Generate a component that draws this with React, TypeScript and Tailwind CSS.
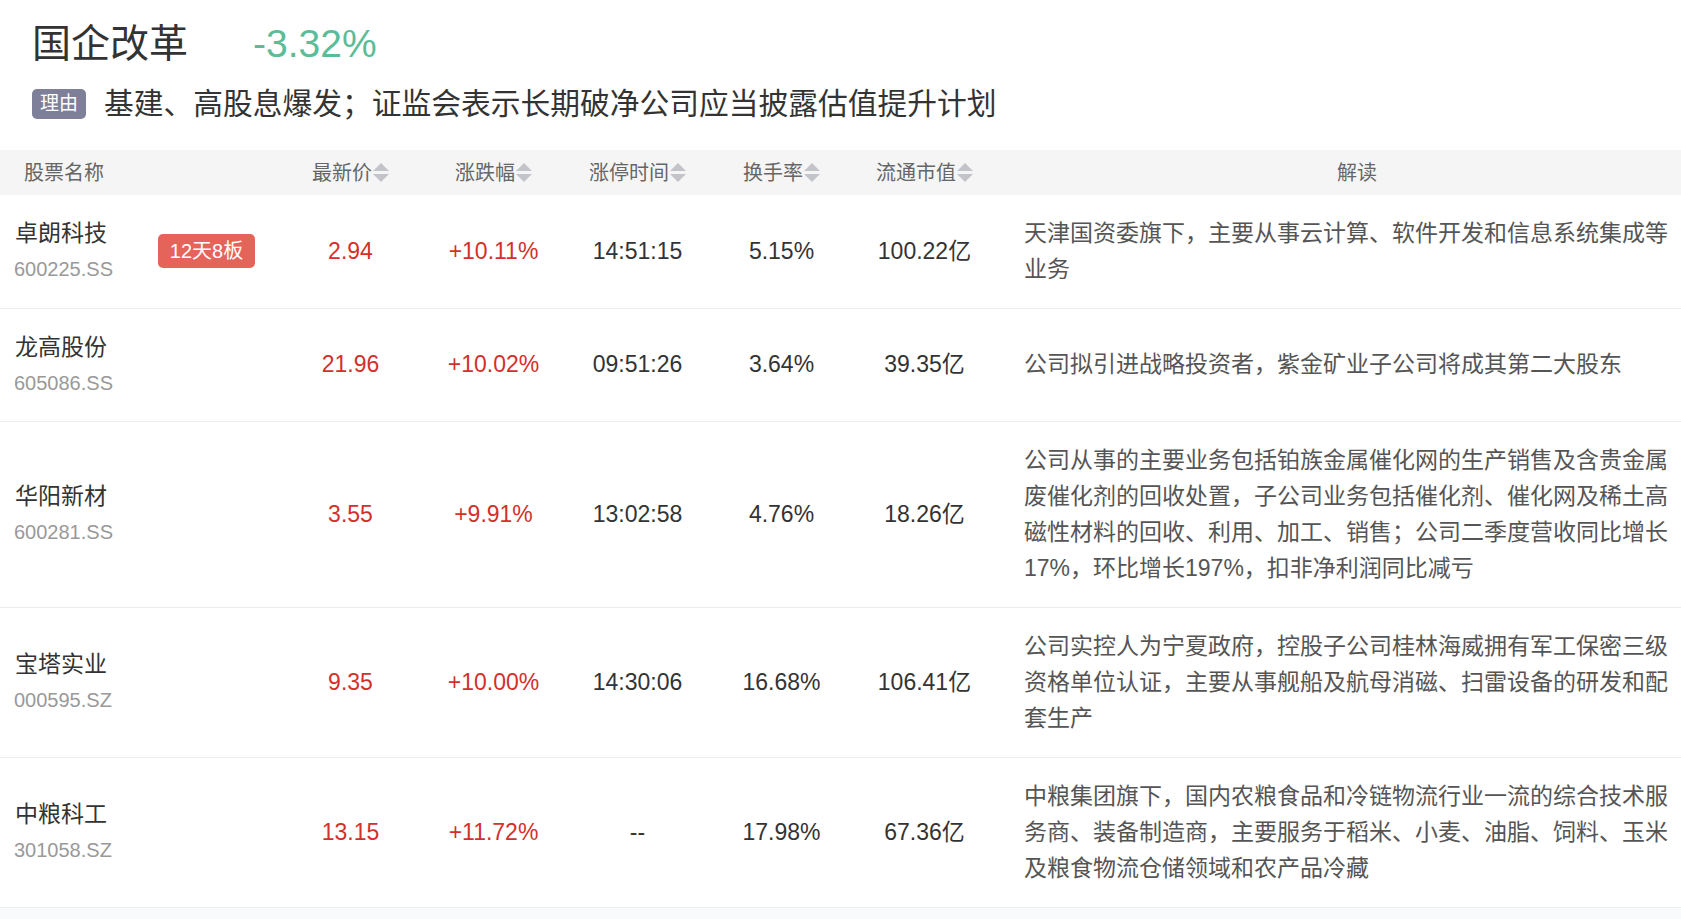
import React from "react";

interface Stock {
  name: string;
  code: string;
  badge?: string;
  price: string;
  change: string;
  time: string;
  turnover: string;
  cap: string;
  desc: string;
}

const stocks: Stock[] = [
  {
    name: "卓朗科技",
    code: "600225.SS",
    badge: "12天8板",
    price: "2.94",
    change: "+10.11%",
    time: "14:51:15",
    turnover: "5.15%",
    cap: "100.22亿",
    desc: "天津国资委旗下，主要从事云计算、软件开发和信息系统集成等业务",
  },
  {
    name: "龙高股份",
    code: "605086.SS",
    price: "21.96",
    change: "+10.02%",
    time: "09:51:26",
    turnover: "3.64%",
    cap: "39.35亿",
    desc: "公司拟引进战略投资者，紫金矿业子公司将成其第二大股东",
  },
  {
    name: "华阳新材",
    code: "600281.SS",
    price: "3.55",
    change: "+9.91%",
    time: "13:02:58",
    turnover: "4.76%",
    cap: "18.26亿",
    desc: "公司从事的主要业务包括铂族金属催化网的生产销售及含贵金属废催化剂的回收处置，子公司业务包括催化剂、催化网及稀土高磁性材料的回收、利用、加工、销售；公司二季度营收同比增长17%，环比增长197%，扣非净利润同比减亏",
  },
  {
    name: "宝塔实业",
    code: "000595.SZ",
    price: "9.35",
    change: "+10.00%",
    time: "14:30:06",
    turnover: "16.68%",
    cap: "106.41亿",
    desc: "公司实控人为宁夏政府，控股子公司桂林海威拥有军工保密三级资格单位认证，主要从事舰船及航母消磁、扫雷设备的研发和配套生产",
  },
  {
    name: "中粮科工",
    code: "301058.SZ",
    price: "13.15",
    change: "+11.72%",
    time: "--",
    turnover: "17.98%",
    cap: "67.36亿",
    desc: "中粮集团旗下，国内农粮食品和冷链物流行业一流的综合技术服务商、装备制造商，主要服务于稻米、小麦、油脂、饲料、玉米及粮食物流仓储领域和农产品冷藏",
  },
];

const cols = "grid grid-cols-[279px_143px_143px_145px_143px_143px_1fr]";

const SortArrows = () => (
  <svg width="16" height="20" viewBox="0 0 16 20" className="ml-[1px]">
    <path d="M8 0 L16 8 L0 8 Z" fill="#c3c4ca" />
    <path d="M0 11 L16 11 L8 19 Z" fill="#c3c4ca" />
  </svg>
);

const SortHeader = ({ label }: { label: string }) => (
  <div className="flex items-center justify-center">
    <span>{label}</span>
    <SortArrows />
  </div>
);

export default function App() {
  return (
    <div
      className="w-full min-h-screen bg-white text-[#333]"
      style={{ fontFamily: '"Liberation Sans", Arial, "Noto Sans CJK SC", sans-serif' }}
    >
      {/* Title */}
      <div className="pl-[32px] pt-[18px]">
        <div className="flex items-center h-[50px]">
          <span className="text-[39px] leading-none text-[#333]">国企改革</span>
          <span className="ml-[65px] text-[39px] leading-none text-[#5bbd97]">-3.32%</span>
        </div>
        <div className="flex items-center mt-[21px] h-[30px]">
          <span className="flex items-center justify-center w-[54px] h-[30px] rounded-[5px] bg-[#7d8098] text-white text-[19px]">
            理由
          </span>
          <span className="ml-[18px] text-[29.75px] leading-none text-[#333]">
            基建、高股息爆发；证监会表示长期破净公司应当披露估值提升计划
          </span>
        </div>
      </div>

      {/* Table */}
      <div className="mt-[31px]">
        <div className={`${cols} h-[45px] items-center bg-[#f5f5f5] text-[20px] text-[#666]`}>
          <div className="pl-[24px]">股票名称</div>
          <SortHeader label="最新价" />
          <SortHeader label="涨跌幅" />
          <SortHeader label="涨停时间" />
          <SortHeader label="换手率" />
          <SortHeader label="流通市值" />
          <div className="text-center pl-[37px]">解读</div>
        </div>

        {stocks.map((s) => (
          <div
            key={s.code}
            className={`${cols} items-center border-b border-[#ececec] py-[20px] text-[23px]`}
          >
            <div className="flex items-center">
              <div className="w-[158px] pl-[15px]">
                <div className="leading-[36px] text-[23px] text-[#333]">{s.name}</div>
                <div className="leading-[36px] text-[20px] text-[#999] -ml-[1px]">{s.code}</div>
              </div>
              {s.badge && (
                <span className="flex items-center justify-center w-[97px] h-[34px] rounded-[5px] bg-[#e5645a] text-white text-[20px]">
                  {s.badge}
                </span>
              )}
            </div>
            <div className="text-center text-[#d3302b]">{s.price}</div>
            <div className="text-center text-[#d3302b]">{s.change}</div>
            <div className="text-center">{s.time}</div>
            <div className="text-center">{s.turnover}</div>
            <div className="text-center">{s.cap}</div>
            <div className="pl-[28px] pr-[4px] leading-[36.3px] text-[#555]">{s.desc}</div>
          </div>
        ))}
        <div className="h-[12px] bg-[#f9fafb]" />
      </div>
    </div>
  );
}
